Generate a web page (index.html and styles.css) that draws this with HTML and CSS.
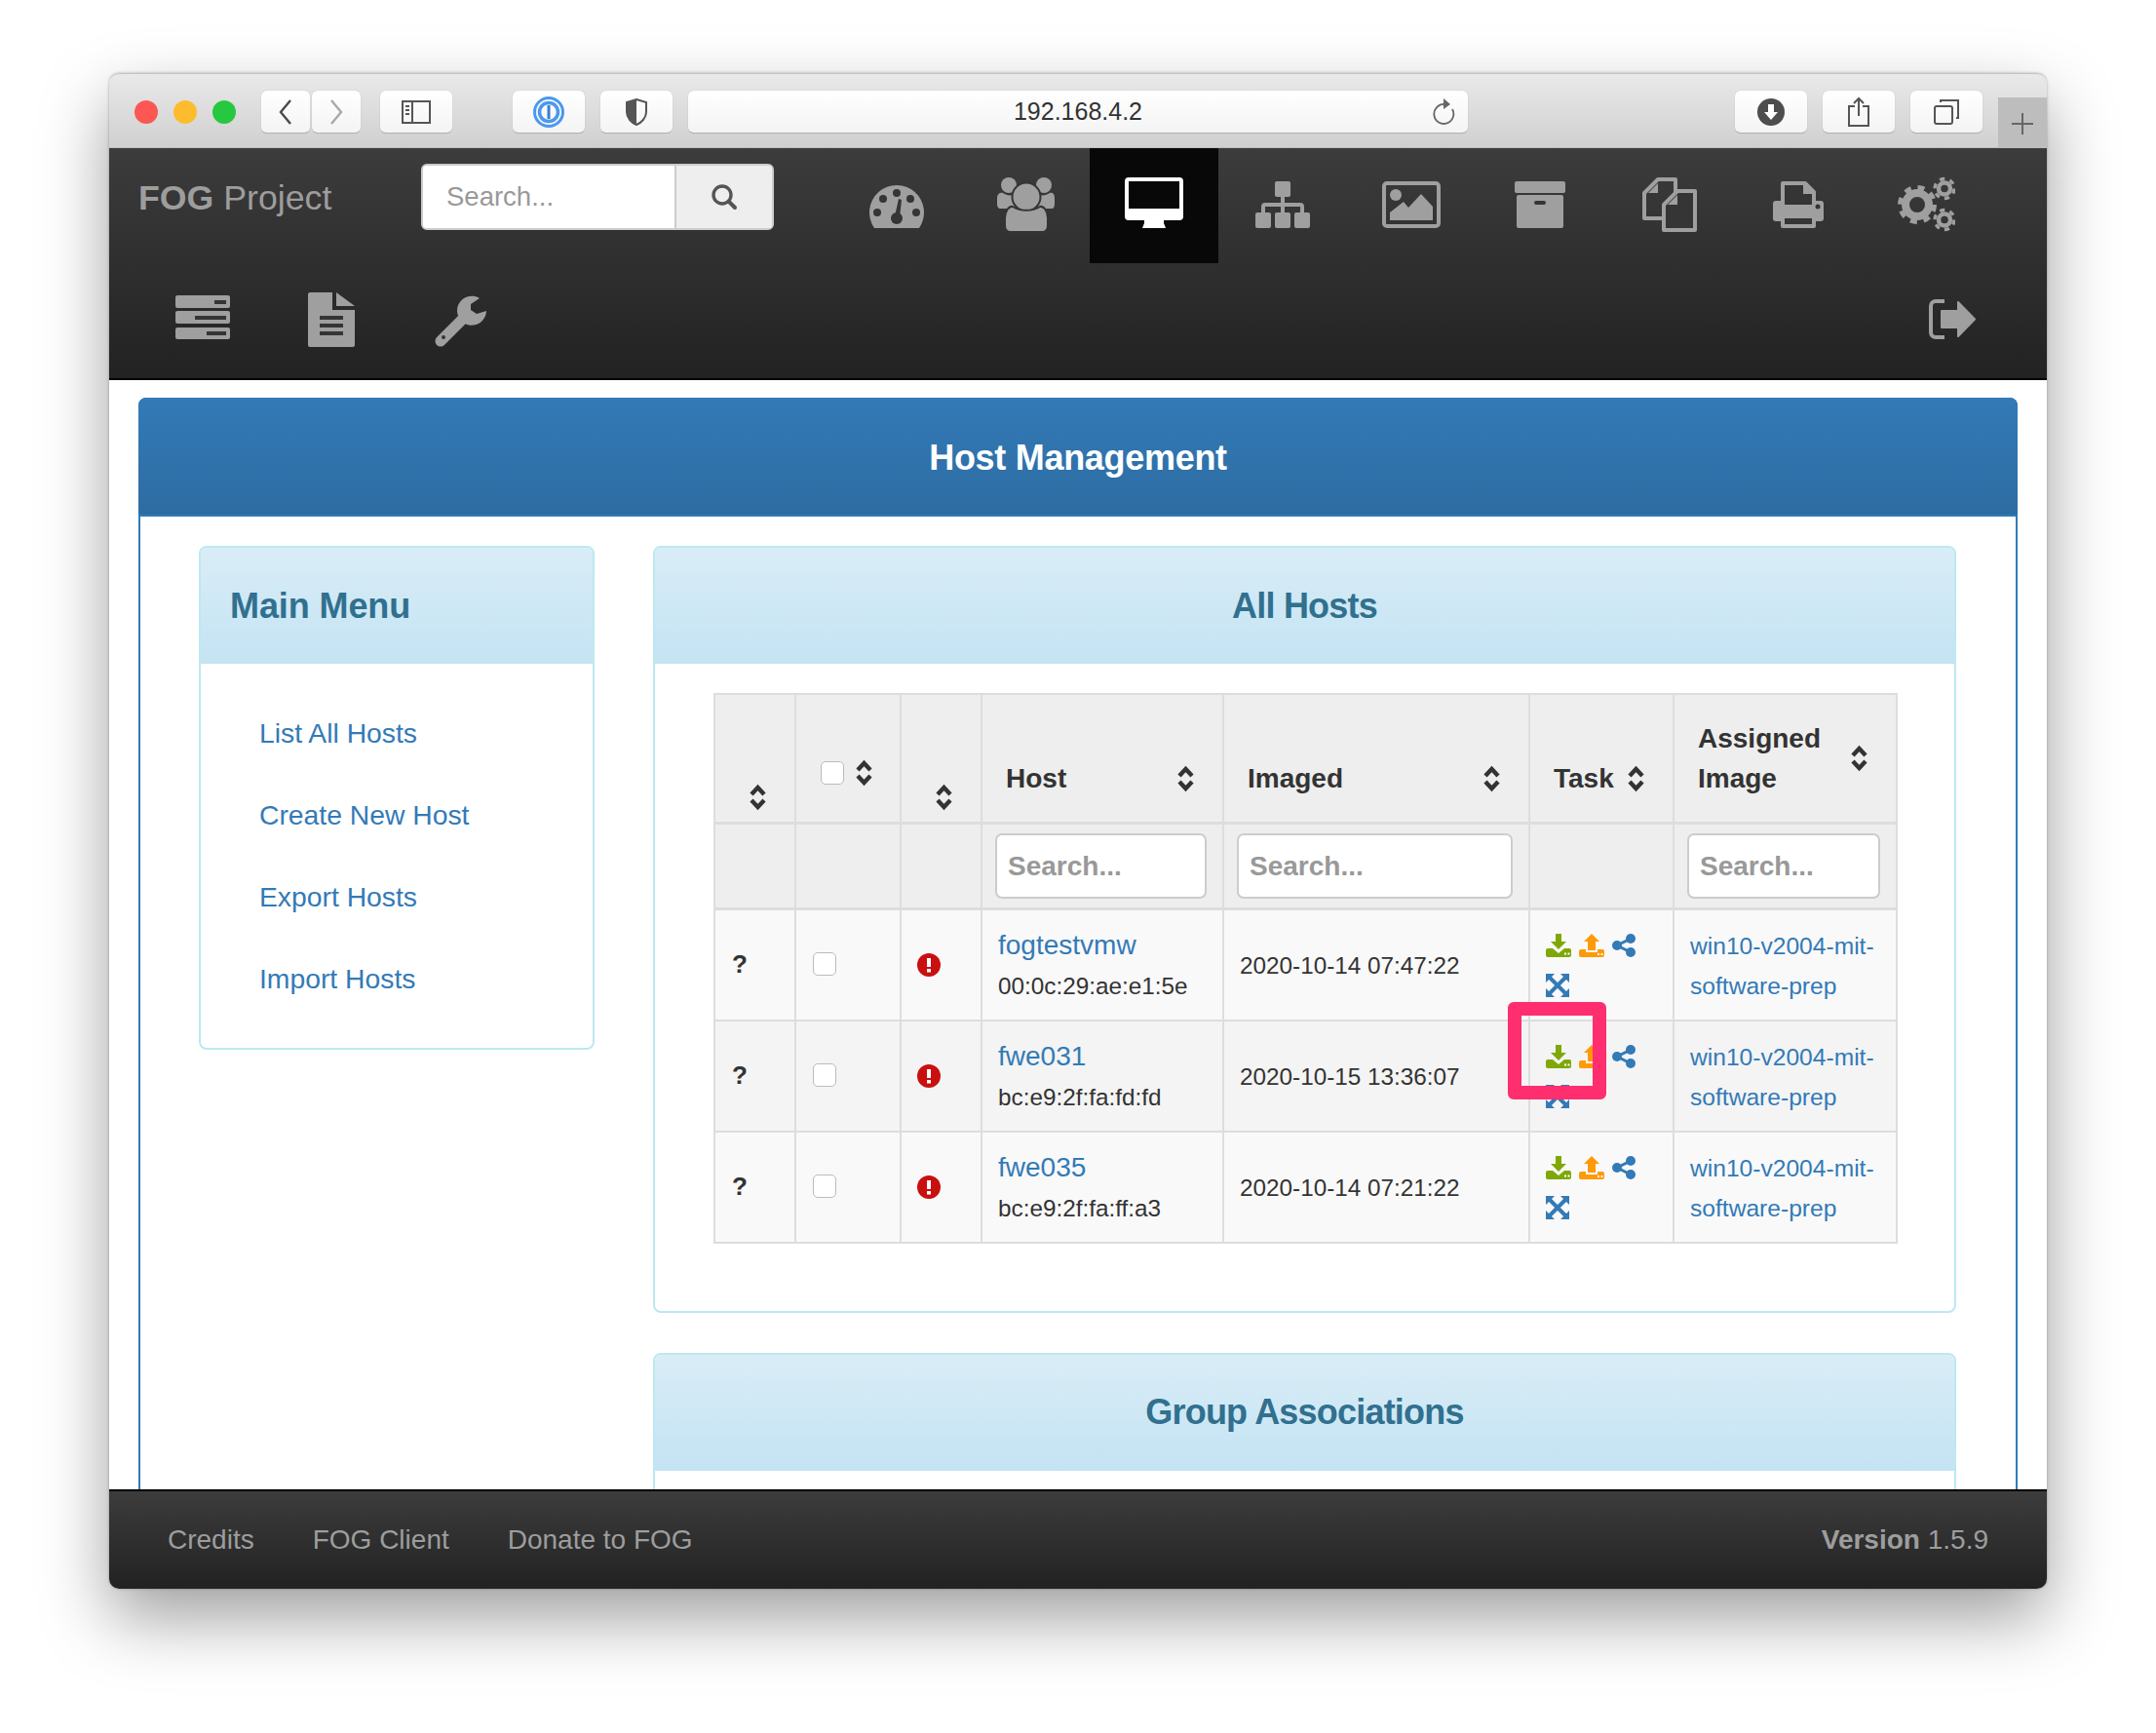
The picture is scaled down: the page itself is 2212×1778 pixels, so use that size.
FILE: index.html
```html
<!DOCTYPE html>
<html lang="en">
<head>
    <meta charset="UTF-8">
    <title>FOG Project - Host Management</title>
    <link rel="stylesheet" href="styles.css">
</head>
<body>
    <div class="window">
        <!-- Safari toolbar -->
        <div class="toolbar">
            <span class="light red"></span>
            <span class="light yellow"></span>
            <span class="light green"></span>
            <div class="tool tool-back">
                <svg width="16" height="26" viewBox="0 0 16 26"><path d="M13 1 L3 13 L13 25" fill="none" stroke="#4a4a4a" stroke-width="2.4"/></svg>
            </div>
            <div class="tool tool-fwd">
                <svg width="16" height="26" viewBox="0 0 16 26"><path d="M3 1 L13 13 L3 25" fill="none" stroke="#a8a8a8" stroke-width="2.4"/></svg>
            </div>
            <div class="tool tool-side">
                <svg width="30" height="24" viewBox="0 0 30 24"><rect x="1" y="1" width="28" height="22" fill="none" stroke="#555" stroke-width="2"/><path d="M11 1 V23" stroke="#555" stroke-width="2"/><path d="M4 6 H8 M4 10 H8 M4 14 H8" stroke="#555" stroke-width="2"/></svg>
            </div>
            <div class="tool tool-pass">
                <svg width="32" height="32" viewBox="0 0 32 32"><circle cx="16" cy="16" r="14.5" fill="none" stroke="#4a98f0" stroke-width="3"/><circle cx="16" cy="16" r="9.5" fill="none" stroke="#4a98f0" stroke-width="3.5"/><rect x="14.5" y="9" width="3" height="14" fill="#3a7fd0"/></svg>
            </div>
            <div class="tool tool-shield">
                <svg width="24" height="28" viewBox="0 0 24 28"><path d="M12 1 L22 4 V14 C22 20 17 25 12 27 C7 25 2 20 2 14 V4 Z" fill="none" stroke="#555" stroke-width="2"/><path d="M12 1 L2 4 V14 C2 20 7 25 12 27 Z" fill="#555"/></svg>
            </div>
            <div class="urlbar">
                <span class="url">192.168.4.2</span>
                <svg class="reload" width="24" height="28" viewBox="0 0 24 28"><path d="M13 6 A10 10 0 1 0 21 11" fill="none" stroke="#666" stroke-width="1.8"/><path d="M12 0 L19 6 L12 11 Z" fill="#666"/></svg>
            </div>
            <div class="tool tool-dl">
                <svg width="30" height="30" viewBox="0 0 30 30"><circle cx="15" cy="15" r="14" fill="#4d4d4d"/><path d="M12 7 H18 V15 H22 L15 23 L8 15 H12 Z" fill="#fff"/></svg>
            </div>
            <div class="tool tool-share">
                <svg width="24" height="32" viewBox="0 0 24 32"><path d="M8 10 H2 V30 H22 V10 H16" fill="none" stroke="#555" stroke-width="2"/><path d="M12 20 V2 M7 7 L12 2 L17 7" fill="none" stroke="#555" stroke-width="2"/></svg>
            </div>
            <div class="tool tool-tabs">
                <svg width="26" height="26" viewBox="0 0 26 26"><rect x="1" y="7" width="18" height="18" rx="2" fill="none" stroke="#555" stroke-width="2"/><path d="M7 3 V1 H25 V19 H23" fill="none" stroke="#555" stroke-width="2"/></svg>
            </div>
            <div class="new-tab">
                <svg width="24" height="24" viewBox="0 0 24 24"><path d="M12 1 V23 M1 12 H23" stroke="#666" stroke-width="2"/></svg>
            </div>
        </div>

        <!-- FOG menu -->
        <div class="topbar">
            <div class="nav-row">
                <div class="brand"><b>FOG</b> Project</div>
                <div class="top-search">
                    <input type="text" placeholder="Search...">
                    <div class="top-search-btn">
                        <svg width="28" height="28" viewBox="0 0 28 28"><circle cx="12" cy="12" r="9" fill="none" stroke="#555" stroke-width="3.4"/><path d="M18.5 18.5 L25 25" stroke="#555" stroke-width="4" stroke-linecap="round"/></svg>
                    </div>
                </div>
                <a class="nav-item">
                    <svg width="60" height="60" viewBox="0 0 60 60"><path d="M7 53 A28 28 0 1 1 53 53 Z" class="ic"/><g class="ic-dark"><circle cx="30" cy="17" r="4"/><circle cx="16" cy="23" r="4"/><circle cx="44" cy="23" r="4"/><circle cx="10" cy="37" r="4"/><circle cx="50" cy="37" r="4"/><circle cx="30" cy="43" r="6"/><path d="M28 41 L32 23 L35 24 L33 42 Z"/></g></svg>
                </a>
                <a class="nav-item">
                    <svg width="60" height="60" viewBox="0 0 60 60"><g class="ic"><circle cx="13" cy="9" r="8"/><circle cx="49" cy="9" r="8"/><path d="M1 22 C1 18 4 16 7 17 C11 20 16 20 20 18 V33 H5 C2 33 1 31 1 28 Z"/><path d="M60 22 C60 18 58 16 55 17 C51 20 46 20 42 18 V33 H57 C59 33 60 31 60 28 Z"/></g><circle cx="31" cy="21" r="14.5" class="ic ic-ring"/><path d="M9 43 C9 36 13 30 17 31 C25 36 37 36 45 31 C49 30 53 36 53 43 V50 C53 54 51 57 47 57 H15 C11 57 9 54 9 50 Z" class="ic ic-ring"/></svg>
                </a>
                <a class="nav-item active">
                    <svg width="60" height="60" viewBox="0 0 60 60"><path fill-rule="evenodd" fill="#fff" d="M4 1 H56 Q60 1 60 5 V41 Q60 45 56 45 H40 L40 48 L42 53 H18 L20 48 L20 45 H4 Q0 45 0 41 V5 Q0 1 4 1 Z M4 5 V33 H56 V5 Z"/></svg>
                </a>
                <a class="nav-item">
                    <svg width="60" height="60" viewBox="0 0 60 60"><g class="ic"><rect x="22" y="5" width="16" height="16" rx="2"/><rect x="2" y="37" width="16" height="16" rx="2"/><rect x="22" y="37" width="16" height="16" rx="2"/><rect x="42" y="37" width="16" height="16" rx="2"/></g><path d="M30 21 V37 M10 37 V31 Q10 29 12 29 H48 Q50 29 50 31 V37" fill="none" stroke="#9f9f9f" stroke-width="4"/></svg>
                </a>
                <a class="nav-item">
                    <svg width="60" height="60" viewBox="0 0 60 60"><rect x="2" y="7" width="56" height="44" rx="3" fill="none" stroke="#9f9f9f" stroke-width="4"/><g class="ic"><circle cx="14" cy="19" r="6"/><path d="M8 45 V37 L22 26 L27 32 L40 18 L52 31 V45 Z"/></g></svg>
                </a>
                <a class="nav-item">
                    <svg width="60" height="60" viewBox="0 0 60 60"><g class="ic"><rect x="4" y="5" width="52" height="12" rx="2"/><rect x="6" y="19" width="48" height="34" rx="2"/></g><rect x="24" y="25" width="12" height="4" rx="2" class="ic-dark"/></svg>
                </a>
                <a class="nav-item">
                    <svg width="60" height="60" viewBox="0 0 60 60"><g fill="none" stroke="#9f9f9f" stroke-width="4" stroke-linejoin="round"><path d="M19 3 H37 V43 H5 V17 Z"/><path d="M39 15 H57 V55 H25 V29 Z" fill="#353535"/></g><g class="ic"><path d="M19 7 V17 H9 Z"/><path d="M39 19 V29 H29 Z"/></g></svg>
                </a>
                <a class="nav-item">
                    <svg width="60" height="60" viewBox="0 0 60 60"><rect x="5" y="25" width="52" height="21" rx="3" class="ic"/><path d="M15 29 V7 H38 L47 16 V29" fill="#353535" stroke="#9f9f9f" stroke-width="4" stroke-linejoin="round"/><path d="M36 5 V18 H49 Z" class="ic"/><path d="M15 41 H47 V51 H15 Z" fill="#353535" stroke="#9f9f9f" stroke-width="4" stroke-linejoin="round"/><circle cx="51" cy="31" r="2.5" class="ic-dark"/></svg>
                </a>
                <a class="nav-item">
                    <svg width="60" height="60" viewBox="0 0 60 60"><g fill="none" stroke="#9f9f9f"><circle cx="21" cy="29" r="12" stroke-width="8"/><circle cx="21" cy="29" r="17.5" stroke-width="5" stroke-dasharray="6.9 6.85"/><circle cx="49" cy="12.5" r="6" stroke-width="4.5"/><circle cx="49" cy="12.5" r="10" stroke-width="3.4" stroke-dasharray="5.2 5.27"/><circle cx="49" cy="44.5" r="6" stroke-width="4.5"/><circle cx="49" cy="44.5" r="10" stroke-width="3.4" stroke-dasharray="5.2 5.27"/></g></svg>
                </a>
            </div>
            <div class="nav-row">
                <a class="nav-item">
                    <svg width="60" height="60" viewBox="0 0 60 60"><g class="ic"><rect x="2" y="4" width="56" height="13" rx="2"/><rect x="2" y="20" width="56" height="13" rx="2"/><rect x="2" y="37" width="56" height="12" rx="2"/></g><g class="ic-dark"><rect x="42" y="9" width="12" height="4"/><rect x="22" y="25" width="32" height="4"/><rect x="34" y="41" width="20" height="4"/></g></svg>
                </a>
                <a class="nav-item">
                    <svg width="60" height="60" viewBox="0 0 60 60"><path d="M6 3 Q6 1 8 1 H31 V19 H54 V55 Q54 57 52 57 H8 Q6 57 6 55 Z" class="ic"/><path d="M35 1 L54 15 H35 Z" class="ic"/><g class="ic-dark"><rect x="18" y="25" width="24" height="4"/><rect x="18" y="33" width="24" height="4"/><rect x="18" y="41" width="24" height="4"/></g></svg>
                </a>
                <a class="nav-item">
                    <svg width="60" height="60" viewBox="0 0 60 60"><path d="M10 51 L32 29" stroke="#9f9f9f" stroke-width="11" stroke-linecap="round"/><path d="M50 7 A15 15 0 1 0 57 20 L47 23 L41 19 L41 13 Z" class="ic"/><circle cx="13" cy="47" r="2" class="ic-dark"/></svg>
                </a>
                <a class="nav-item nav-logout">
                    <svg width="60" height="60" viewBox="0 0 60 60"><path d="M21 10 H12 A5 5 0 0 0 7 15 V42 A5 5 0 0 0 12 47 H21" fill="none" stroke="#9f9f9f" stroke-width="4"/><path d="M18 20 H35 V11 L52 28.5 L35 46 V37 H18 Z" class="ic" stroke="#9f9f9f" stroke-width="2" stroke-linejoin="round"/></svg>
                </a>
            </div>
        </div>

        <!-- page content, cut off by the footer -->
        <div class="main">
            <div class="panel-main">
                <div class="panel-main-head">Host Management</div>
                <div class="panel-main-body">
                    <div class="side">
                        <div class="box">
                            <div class="box-head box-head-left">Main Menu</div>
                            <ul class="menu">
                                <li><a>List All Hosts</a></li>
                                <li><a>Create New Host</a></li>
                                <li><a>Export Hosts</a></li>
                                <li><a>Import Hosts</a></li>
                            </ul>
                        </div>
                    </div>
                    <div class="content">
                        <div class="box">
                            <div class="box-head">All Hosts</div>
                            <div class="box-body">
                                <table class="hosts">
                                    <colgroup>
                                        <col class="c-ping"><col class="c-check"><col class="c-status"><col class="c-host"><col class="c-imaged"><col class="c-task"><col class="c-image">
                                    </colgroup>
                                    <thead>
                                        <tr class="head-row">
                                            <th><div class="th-in th-low"><svg class="sort" viewBox="0 0 19 28"><path d="M3 11 L9.5 4 L16 11 M3 17 L9.5 24 L16 17"/></svg></div></th>
                                            <th><div class="th-in th-high"><input type="checkbox" class="check"><svg class="sort" viewBox="0 0 19 28"><path d="M3 11 L9.5 4 L16 11 M3 17 L9.5 24 L16 17"/></svg></div></th>
                                            <th><div class="th-in th-low"><svg class="sort" viewBox="0 0 19 28"><path d="M3 11 L9.5 4 L16 11 M3 17 L9.5 24 L16 17"/></svg></div></th>
                                            <th><div class="th-in"><span>Host</span><svg class="sort" viewBox="0 0 19 28"><path d="M3 11 L9.5 4 L16 11 M3 17 L9.5 24 L16 17"/></svg></div></th>
                                            <th><div class="th-in"><span>Imaged</span><svg class="sort" viewBox="0 0 19 28"><path d="M3 11 L9.5 4 L16 11 M3 17 L9.5 24 L16 17"/></svg></div></th>
                                            <th><div class="th-in"><span>Task</span><svg class="sort" viewBox="0 0 19 28"><path d="M3 11 L9.5 4 L16 11 M3 17 L9.5 24 L16 17"/></svg></div></th>
                                            <th><div class="th-in"><span>Assigned<br>Image</span><svg class="sort" viewBox="0 0 19 28"><path d="M3 11 L9.5 4 L16 11 M3 17 L9.5 24 L16 17"/></svg></div></th>
                                        </tr>
                                        <tr class="filter-row">
                                            <th></th>
                                            <th></th>
                                            <th></th>
                                            <th><input type="text" class="filter" placeholder="Search..."></th>
                                            <th><input type="text" class="filter" placeholder="Search..."></th>
                                            <th></th>
                                            <th><input type="text" class="filter" placeholder="Search..."></th>
                                        </tr>
                                    </thead>
                                    <tbody>
                                        <tr>
                                            <td class="ping">?</td>
                                            <td class="cell-check"><input type="checkbox" class="check"></td>
                                            <td class="cell-status"><svg class="status" viewBox="0 0 24 24"><circle cx="12" cy="12" r="12" fill="#c9100f"/><rect x="10" y="5" width="4" height="9" fill="#fff"/><rect x="10" y="16" width="4" height="3.5" fill="#fff"/></svg></td>
                                            <td><a class="host-link">fogtestvmw</a><br>00:0c:29:ae:e1:5e</td>
                                            <td>2020-10-14 07:47:22</td>
                                            <td>
                                                <div class="tasks">
                                                    <svg class="t-wide" viewBox="0 0 26 24"><path fill="#7fa807" d="M10 0 H16 V8 H21 L13 16 L5 8 H10 Z M0 17 Q0 15 2 15 H7 L13 20 L19 15 H24 Q26 15 26 17 V22 Q26 24 24 24 H2 Q0 24 0 22 Z"/><path d="M19 20.5 H21 M22.5 20.5 H24.5" stroke="#fff" stroke-width="2"/></svg>
                                                    <svg class="t-wide" viewBox="0 0 26 24"><path fill="#ff9a07" d="M13 0 L21 8 H17 V17 H9 V8 H5 Z M0 18 Q0 16 2 16 H7 V19 H19 V16 H24 Q26 16 26 18 V22 Q26 24 24 24 H2 Q0 24 0 22 Z"/><path d="M19 21 H21 M22.5 21 H24.5" stroke="#fff" stroke-width="2"/></svg>
                                                    <svg class="t-share" viewBox="0 0 24 24"><path d="M19 5 L5 12 L19 19" fill="none" stroke="#337ab7" stroke-width="3"/><circle cx="19" cy="5" r="5" fill="#337ab7"/><circle cx="5" cy="12" r="5" fill="#337ab7"/><circle cx="19" cy="19" r="5" fill="#337ab7"/></svg>
                                                    <svg class="t-share" viewBox="0 0 24 24"><path fill="#337ab7" d="M0 0 H9 L0 9 Z M24 0 V9 L15 0 Z M0 24 V15 L9 24 Z M24 24 H15 L24 15 Z"/><path d="M4 4 L20 20 M20 4 L4 20" stroke="#337ab7" stroke-width="4"/></svg>
                                                </div>
                                            </td>
                                            <td><a class="image-link">win10-v2004-mit-<br>software-prep</a></td>
                                        </tr>
                                        <tr>
                                            <td class="ping">?</td>
                                            <td class="cell-check"><input type="checkbox" class="check"></td>
                                            <td class="cell-status"><svg class="status" viewBox="0 0 24 24"><circle cx="12" cy="12" r="12" fill="#c9100f"/><rect x="10" y="5" width="4" height="9" fill="#fff"/><rect x="10" y="16" width="4" height="3.5" fill="#fff"/></svg></td>
                                            <td><a class="host-link">fwe031</a><br>bc:e9:2f:fa:fd:fd</td>
                                            <td>2020-10-15 13:36:07</td>
                                            <td>
                                                <div class="tasks">
                                                    <svg class="t-wide" viewBox="0 0 26 24"><path fill="#7fa807" d="M10 0 H16 V8 H21 L13 16 L5 8 H10 Z M0 17 Q0 15 2 15 H7 L13 20 L19 15 H24 Q26 15 26 17 V22 Q26 24 24 24 H2 Q0 24 0 22 Z"/><path d="M19 20.5 H21 M22.5 20.5 H24.5" stroke="#fff" stroke-width="2"/></svg>
                                                    <svg class="t-wide" viewBox="0 0 26 24"><path fill="#ff9a07" d="M13 0 L21 8 H17 V17 H9 V8 H5 Z M0 18 Q0 16 2 16 H7 V19 H19 V16 H24 Q26 16 26 18 V22 Q26 24 24 24 H2 Q0 24 0 22 Z"/><path d="M19 21 H21 M22.5 21 H24.5" stroke="#fff" stroke-width="2"/></svg>
                                                    <svg class="t-share" viewBox="0 0 24 24"><path d="M19 5 L5 12 L19 19" fill="none" stroke="#337ab7" stroke-width="3"/><circle cx="19" cy="5" r="5" fill="#337ab7"/><circle cx="5" cy="12" r="5" fill="#337ab7"/><circle cx="19" cy="19" r="5" fill="#337ab7"/></svg>
                                                    <svg class="t-share" viewBox="0 0 24 24"><path fill="#337ab7" d="M0 0 H9 L0 9 Z M24 0 V9 L15 0 Z M0 24 V15 L9 24 Z M24 24 H15 L24 15 Z"/><path d="M4 4 L20 20 M20 4 L4 20" stroke="#337ab7" stroke-width="4"/></svg>
                                                </div>
                                            </td>
                                            <td><a class="image-link">win10-v2004-mit-<br>software-prep</a></td>
                                        </tr>
                                        <tr>
                                            <td class="ping">?</td>
                                            <td class="cell-check"><input type="checkbox" class="check"></td>
                                            <td class="cell-status"><svg class="status" viewBox="0 0 24 24"><circle cx="12" cy="12" r="12" fill="#c9100f"/><rect x="10" y="5" width="4" height="9" fill="#fff"/><rect x="10" y="16" width="4" height="3.5" fill="#fff"/></svg></td>
                                            <td><a class="host-link">fwe035</a><br>bc:e9:2f:fa:ff:a3</td>
                                            <td>2020-10-14 07:21:22</td>
                                            <td>
                                                <div class="tasks">
                                                    <svg class="t-wide" viewBox="0 0 26 24"><path fill="#7fa807" d="M10 0 H16 V8 H21 L13 16 L5 8 H10 Z M0 17 Q0 15 2 15 H7 L13 20 L19 15 H24 Q26 15 26 17 V22 Q26 24 24 24 H2 Q0 24 0 22 Z"/><path d="M19 20.5 H21 M22.5 20.5 H24.5" stroke="#fff" stroke-width="2"/></svg>
                                                    <svg class="t-wide" viewBox="0 0 26 24"><path fill="#ff9a07" d="M13 0 L21 8 H17 V17 H9 V8 H5 Z M0 18 Q0 16 2 16 H7 V19 H19 V16 H24 Q26 16 26 18 V22 Q26 24 24 24 H2 Q0 24 0 22 Z"/><path d="M19 21 H21 M22.5 21 H24.5" stroke="#fff" stroke-width="2"/></svg>
                                                    <svg class="t-share" viewBox="0 0 24 24"><path d="M19 5 L5 12 L19 19" fill="none" stroke="#337ab7" stroke-width="3"/><circle cx="19" cy="5" r="5" fill="#337ab7"/><circle cx="5" cy="12" r="5" fill="#337ab7"/><circle cx="19" cy="19" r="5" fill="#337ab7"/></svg>
                                                    <svg class="t-share" viewBox="0 0 24 24"><path fill="#337ab7" d="M0 0 H9 L0 9 Z M24 0 V9 L15 0 Z M0 24 V15 L9 24 Z M24 24 H15 L24 15 Z"/><path d="M4 4 L20 20 M20 4 L4 20" stroke="#337ab7" stroke-width="4"/></svg>
                                                </div>
                                            </td>
                                            <td><a class="image-link">win10-v2004-mit-<br>software-prep</a></td>
                                        </tr>
                                    </tbody>
                                </table>
                            </div>
                        </div>
                        <div class="box box-cut">
                            <div class="box-head">Group Associations</div>
                            <div class="box-body"></div>
                        </div>
                    </div>
                </div>
            </div>
        </div>

        <div class="footer">
            <a>Credits</a>
            <a>FOG Client</a>
            <a>Donate to FOG</a>
            <span class="version"><b>Version</b> 1.5.9</span>
        </div>
    </div>

    <!-- pink highlight drawn over the screenshot -->
    <div class="highlight"></div>
</body>
</html>
```

FILE: styles.css
```css
body {
    margin: 0;
    height: 1778px;
    overflow: hidden;
    background-color: #fff;
    font-family: "Liberation Sans", Arial, sans-serif;
    color: #333;
}

a {
    color: #337ab7;
}

.window {
    width: 1988px;
    height: 1555px;
    margin: 75px 0 0 112px;
    display: flex;
    flex-direction: column;
    border-radius: 10px;
    box-shadow: 0 30px 70px rgba(0, 0, 0, 0.38), 0 0 3px rgba(0, 0, 0, 0.3);
}

/* toolbar */
.toolbar {
    height: 77px;
    box-sizing: border-box;
    flex-shrink: 0;
    display: flex;
    align-items: flex-start;
    padding: 17px 0 0 26px;
    background: linear-gradient(#e9e9e9, #d0d0d0);
    border-top: 1px solid #c4c4c4;
    border-bottom: 1px solid #bdbdbd;
    border-radius: 10px 10px 0 0;
}

.light {
    width: 24px;
    height: 24px;
    margin: 10px 16px 0 0;
    border-radius: 50%;
    flex-shrink: 0;
}

.red { background-color: #fc5753; }
.yellow { background-color: #fdbc2e; }
.green { background-color: #26c840; }

.tool, .urlbar {
    height: 44px;
    box-sizing: border-box;
    display: flex;
    align-items: center;
    justify-content: center;
    background: linear-gradient(#fff, #f4f4f4);
    border-radius: 6px;
    border-bottom: 1px solid #b4b4b4;
    box-shadow: 0 0 1px rgba(0, 0, 0, 0.25);
    flex-shrink: 0;
}

.tool-back { width: 50px; margin-left: 10px; }
.tool-fwd { width: 50px; margin-left: 2px; }
.tool-side { width: 74px; margin-left: 20px; }
.tool-pass { width: 74px; margin-left: 62px; }
.tool-shield { width: 74px; margin-left: 16px; }
.tool-dl { width: 74px; margin-left: 274px; }
.tool-share { width: 74px; margin-left: 16px; }
.tool-tabs { width: 74px; margin-left: 16px; }

.urlbar {
    width: 800px;
    margin-left: 16px;
    position: relative;
}

.url {
    font-size: 25px;
    color: #333;
}

.reload {
    position: absolute;
    right: 13px;
    top: 8px;
}

.new-tab {
    width: 50px;
    height: 51px;
    box-sizing: border-box;
    padding-top: 3px;
    margin: 7px 0 0 16px;
    background-color: #bdbdbd;
    display: flex;
    align-items: center;
    justify-content: center;
}

/* dark menu */
.topbar {
    height: 238px;
    box-sizing: border-box;
    flex-shrink: 0;
    padding: 0 30px;
    background: linear-gradient(#3c3c3c, #222);
    border-bottom: 2px solid #000;
}

.nav-row {
    display: flex;
    height: 118px;
}

.brand {
    width: 290px;
    padding-top: 31px;
    font-size: 35.7px;
    color: #9d9d9d;
}

.top-search {
    width: 362px;
    height: 68px;
    box-sizing: border-box;
    margin-top: 16px;
    margin-right: 60px;
    display: flex;
    border: 2px solid #ccc;
    border-radius: 6px;
    background-color: #fff;
    overflow: hidden;
}

.top-search input {
    width: 258px;
    border: none;
    outline: none;
    padding: 0 0 0 24px;
    font-size: 27.5px;
    font-family: inherit;
    box-sizing: border-box;
}

.top-search input::placeholder,
.filter::placeholder {
    color: #999;
    opacity: 1;
}

.top-search-btn {
    flex: 1;
    display: flex;
    align-items: center;
    justify-content: center;
    background-color: #eee;
    border-left: 2px solid #ccc;
}

.nav-item {
    width: 132px;
    display: flex;
    align-items: center;
    justify-content: center;
}

.nav-item.active {
    background-color: #080808;
}

.nav-logout {
    margin-left: auto;
}

.ic {
    fill: #9f9f9f;
}

.ic-dark {
    fill: #353535;
}

.ic-ring {
    stroke: #353535;
    stroke-width: 2;
}

/* page */
.main {
    flex: 1;
    min-height: 0;
    overflow: hidden;
    background-color: #fff;
    padding: 18px 30px 0;
}

.panel-main {
    border: 2px solid #337ab7;
    border-radius: 8px;
}

.panel-main-head {
    height: 117px;
    padding-top: 3px;
    display: flex;
    align-items: center;
    justify-content: center;
    margin: -2px -2px 0;
    border-radius: 8px 8px 0 0;
    background: linear-gradient(#337ab7, #2d6ca2);
    border-bottom: 2px solid #337ab7;
    font-size: 36px;
    font-weight: bold;
    letter-spacing: -0.3px;
    color: #fff;
}

.panel-main-body {
    display: flex;
    gap: 60px;
    padding: 30px 61px 0 60px;
}

.side {
    width: 406px;
    flex-shrink: 0;
}

.content {
    width: 1337px;
    flex-shrink: 0;
    display: flex;
    flex-direction: column;
    gap: 41px;
}

.box {
    border: 2px solid #bce8f1;
    border-radius: 8px;
    background-color: #fff;
}

.box-head {
    height: 119px;
    display: flex;
    align-items: center;
    justify-content: center;
    border-radius: 6px 6px 0 0;
    background: linear-gradient(#d9edf7, #c4e3f3);
    font-size: 36px;
    font-weight: bold;
    letter-spacing: -0.8px;
    color: #31708f;
}

.box-head-left {
    justify-content: flex-start;
    padding-left: 30px;
    letter-spacing: -0.1px;
}

.menu {
    list-style: none;
    margin: 0;
    padding: 29px 0 29px 60px;
}

.menu li {
    height: 84px;
    display: flex;
    align-items: center;
    font-size: 28.3px;
}

.box-body {
    padding: 30px 60px 69px;
}

.box-cut .box-body {
    height: 100px;
}

/* table */
.hosts {
    width: 1213px;
    table-layout: fixed;
    border-collapse: collapse;
    font-size: 24.3px;
    line-height: 41px;
}

.c-ping { width: 83px; }
.c-check { width: 108px; }
.c-status { width: 83px; }
.c-host { width: 248px; }
.c-imaged { width: 314px; }
.c-task { width: 148px; }
.c-image { width: 229px; }

.hosts th, .hosts td {
    border: 2px solid #ddd;
    padding: 0;
}

.hosts th {
    background-color: #eee;
    text-align: left;
    font-size: 28px;
    vertical-align: bottom;
}

.head-row th {
    height: 130px;
    border-bottom-width: 3px;
}

.th-in {
    display: flex;
    align-items: center;
    justify-content: space-between;
    padding: 0 28px 24px 24px;
}

.th-low {
    justify-content: center;
    padding: 0 0 11px 6px;
}

.th-high {
    justify-content: flex-start;
    gap: 11px;
    padding: 0 0 36px 25px;
}

.sort {
    width: 19px;
    height: 28px;
    flex-shrink: 0;
    fill: none;
    stroke: #333;
    stroke-width: 4.4;
}

.filter-row th {
    height: 85px;
    vertical-align: middle;
    border-bottom-width: 3px;
    padding: 0 16px 0 13px;
}

.filter {
    width: 100%;
    height: 67px;
    box-sizing: border-box;
    border: 2px solid #ccc;
    border-radius: 7px;
    outline: none;
    padding: 0 0 0 11px;
    background-color: #fff;
    font-family: inherit;
    font-size: 28px;
    font-weight: bold;
}

.hosts tbody tr {
    height: 114px;
    background-color: #f9f9f9;
}

.hosts tbody tr:nth-child(even) {
    background-color: #f4f4f4;
}

.hosts td {
    padding: 2px 0 0 16px;
}

.hosts td.ping {
    padding: 0 0 0 17px;
    font-size: 26px;
    font-weight: bold;
}

.hosts td.cell-check,
.hosts td.cell-status {
    padding-top: 0;
}

.check {
    appearance: none;
    width: 24px;
    height: 24px;
    margin: 0;
    display: block;
    background-color: #fff;
    border: 1.5px solid #bbb;
    border-radius: 5px;
    box-sizing: border-box;
    flex-shrink: 0;
}

.cell-check .check {
    margin: -2px 0 0 1px;
}

.status {
    display: block;
    width: 24px;
    height: 24px;
}

.host-link {
    font-size: 28px;
}

.image-link {
    font-size: 24.6px;
}

.tasks {
    width: 100px;
    display: flex;
    flex-wrap: wrap;
    column-gap: 8px;
    row-gap: 17px;
}

.t-wide {
    width: 26px;
    height: 24px;
}

.t-share {
    width: 24px;
    height: 24px;
}

/* footer */
.footer {
    height: 102px;
    box-sizing: border-box;
    flex-shrink: 0;
    display: flex;
    align-items: center;
    gap: 60px;
    padding: 0 60px;
    background: linear-gradient(#3c3c3c, #222);
    border-top: 2px solid #000;
    border-radius: 0 0 10px 10px;
    font-size: 28px;
    color: #9d9d9d;
}

.footer a {
    color: #9d9d9d;
}

.version {
    margin-left: auto;
}

/* over the page */
.highlight {
    position: absolute;
    left: 1547px;
    top: 1028px;
    width: 101px;
    height: 100px;
    box-sizing: border-box;
    border: 14px solid #ff2e6f;
    border-radius: 6px;
}
```
